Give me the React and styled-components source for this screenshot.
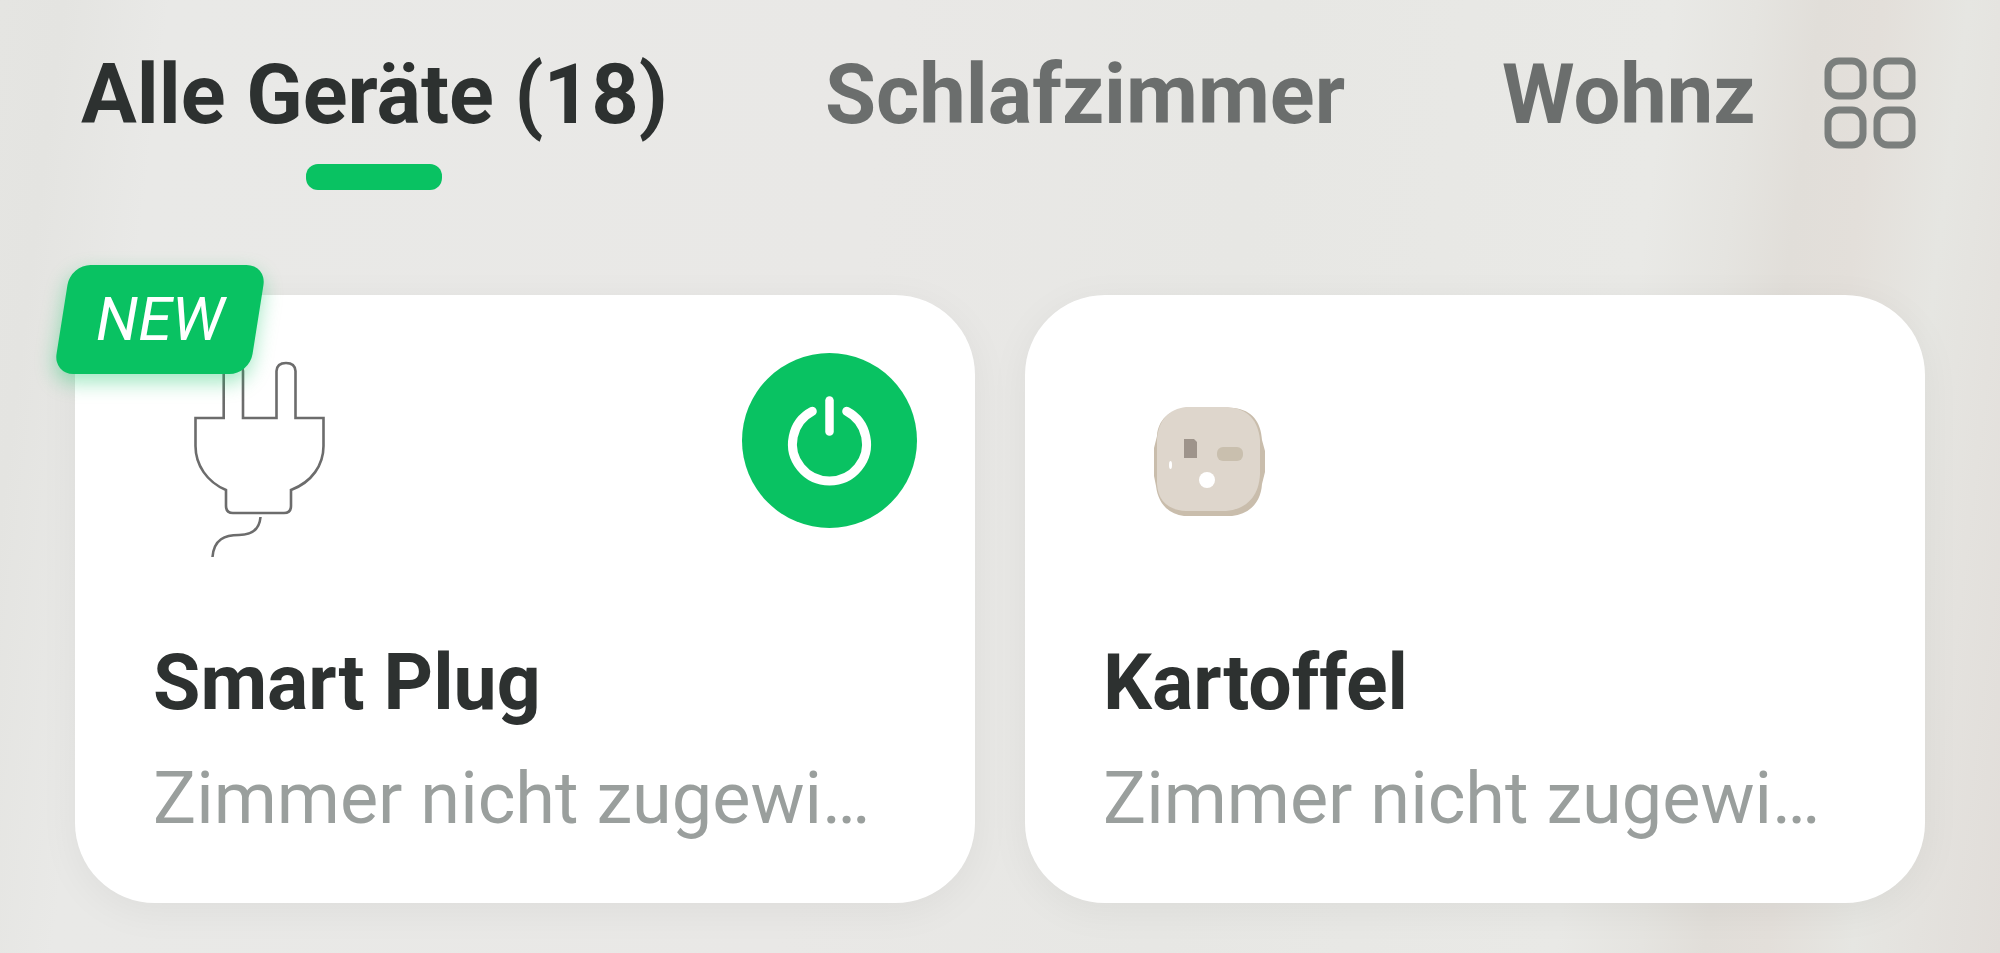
import React, { useState } from 'react';
import styled, { createGlobalStyle, css } from 'styled-components';

const GlobalStyle = createGlobalStyle`
  * {
    box-sizing: border-box;
  }
  body {
    margin: 0;
    background-color: #e8e8e5;
    font-family: Roboto, "Liberation Sans", sans-serif;
  }
  button {
    padding: 0;
    border: 0;
    background: none;
    font-family: inherit;
    cursor: pointer;
  }
`;

const StyledPage = styled.main`
  min-height: 100vh;
  padding: 45px 75px 50px;
  background-image: linear-gradient(
    97deg,
    #e5e5e2 0%,
    #e4e4e1 3%,
    #e9e9e7 8%,
    #e9e8e6 42%,
    #e7e7e4 60%,
    #e9e9e6 79%,
    #e5e4e0 83%,
    #e1ded9 86%,
    #e3dfda 89%,
    #e6e6e2 93%,
    #e4e2de 96%,
    #e1ddd9 100%
  );
`;

const StyledHeader = styled.header`
  display: flex;
  align-items: flex-start;
  justify-content: space-between;
  padding: 0 9px 0 6px;
`;

const StyledTabs = styled.nav`
  display: flex;
  gap: 157px;
  min-width: 0;
  overflow: hidden;
`;

const StyledTab = styled.button`
  display: flex;
  flex-direction: column;
  align-items: center;
  gap: 19px;
  font-size: 83px;
  line-height: 100px;
  font-weight: bold;
  white-space: nowrap;
  color: #6b6e6d;
  ${({ $active }) => $active && css`
    color: #2d3130;
    &::after {
      content: '';
      width: 136px;
      height: 26px;
      border-radius: 12px;
      background-color: #09c262;
    }
  `}
`;

const StyledGridButton = styled.button`
  flex: none;
  margin-top: 12px;
  svg {
    display: block;
  }
`;

const StyledCards = styled.section`
  display: grid;
  grid-template-columns: 1fr 1fr;
  gap: 50px;
  margin-top: 105px;
`;

const StyledCard = styled.article`
  position: relative;
  padding: 58px 58px 56px 78px;
  border-radius: 80px;
  background-color: white;
  box-shadow: 0 8px 40px rgba(0, 0, 0, 0.05);
`;

const StyledCardTop = styled.div`
  display: flex;
  align-items: flex-start;
  justify-content: space-between;
  height: 280px;
  svg {
    display: block;
  }
`;

const StyledPower = styled.button`
  width: 175px;
  height: 175px;
  border-radius: 50%;
  background-color: #09c262;
`;

const StyledName = styled.h2`
  margin: 0;
  font-size: 77px;
  line-height: 100px;
  font-weight: bold;
  color: #2d3130;
`;

const StyledRoom = styled.p`
  margin: 18px 0 0;
  font-size: 72px;
  line-height: 96px;
  white-space: nowrap;
  color: #9a9f9d;
`;

const StyledBadge = styled.span`
  position: absolute;
  top: -30px;
  left: -13px;
  z-index: 1;
  padding: 0 34px;
  font-size: 61px;
  line-height: 109px;
  font-style: italic;
  color: white;
  &::before {
    content: '';
    position: absolute;
    inset: 0;
    z-index: -1;
    border-radius: 20px;
    background-color: #09c262;
    box-shadow: 0 8px 20px rgba(9, 194, 98, 0.4);
    transform: skewX(-9deg);
  }
`;

const GridIcon = () => (
  <svg width="92" height="92" viewBox="0 0 92 92" fill="none" stroke="#7b7f7d" strokeWidth="7">
    <rect x="4" y="4" width="35" height="35" rx="11" />
    <rect x="53" y="4" width="35" height="35" rx="11" />
    <rect x="4" y="53" width="35" height="35" rx="11" />
    <rect x="53" y="53" width="35" height="35" rx="11" />
  </svg>
);

const PlugIcon = () => (
  <svg width="212" height="212" viewBox="153 353 212 212" fill="none" stroke="#6c6c6c" strokeWidth="2.6">
    <path d="M195.5 418H223.7V371Q224 363 233.5 363T243 371V418H276.5V371Q277 363 286 363T295.5 371V418H323.5V446C323.5 465 312 482 291 490V506Q291 513 284 513H233Q226 513 226 506V490C207 482 195.5 465 195.5 446Z" />
    <path d="M260.5 517C259.5 529 252 535 239 535C225 535 214 539 212.5 557" />
  </svg>
);

const PowerIcon = () => (
  <svg width="175" height="175" viewBox="0 0 175 175" fill="none" stroke="white" strokeLinecap="round">
    <path d="M70.3 58.3A37 37 0 1 0 104.7 58.3" strokeWidth="9" />
    <path d="M87.5 47.5V78.5" strokeWidth="8.5" />
  </svg>
);

const SocketIcon = () => (
  <svg width="212" height="212" viewBox="1103 353 212 212">
    <path d="M1186 408H1234C1252 410 1261 422 1262 440L1265 451V472L1262 484C1261 502 1250 514 1232 516H1184C1168 514 1158 503 1156 486L1154 476V448L1157 436C1158 420 1169 410 1186 408Z" fill="#c9bdac" />
    <path d="M1186 407H1228C1248 409 1258 420 1260 440V474C1259 496 1247 509 1226 511H1186C1167 510 1158 500 1157 484V440C1158 420 1169 409 1186 407Z" fill="#ded6cc" />
    <path d="M1184 439H1194L1197 442V458H1184Z" fill="#9e948b" />
    <rect x="1217" y="447" width="26" height="14" rx="6" fill="#c9bfae" />
    <circle cx="1207" cy="480" r="8" fill="white" />
    <ellipse cx="1170.5" cy="465" rx="1.5" ry="4" fill="white" />
  </svg>
);

const tabs = ['Alle Geräte (18)', 'Schlafzimmer', 'Wohnz'];

const devices = [
  { name: 'Smart Plug', room: 'Zimmer nicht zugewi…', icon: <PlugIcon />, isNew: true, power: true },
  { name: 'Kartoffel', room: 'Zimmer nicht zugewi…', icon: <SocketIcon /> },
];

const App = () => {
  const [activeTab, setActiveTab] = useState(0);

  return (
    <>
      <GlobalStyle />
      <StyledPage>
        <StyledHeader>
          <StyledTabs>
            {tabs.map((tab, i) => (
              <StyledTab key={tab} $active={i === activeTab} onClick={() => setActiveTab(i)}>
                {tab}
              </StyledTab>
            ))}
          </StyledTabs>
          <StyledGridButton aria-label="Räume">
            <GridIcon />
          </StyledGridButton>
        </StyledHeader>
        <StyledCards>
          {devices.map((device) => (
            <StyledCard key={device.name}>
              {device.isNew && <StyledBadge>NEW</StyledBadge>}
              <StyledCardTop>
                {device.icon}
                {device.power && (
                  <StyledPower aria-label="Ein/Aus">
                    <PowerIcon />
                  </StyledPower>
                )}
              </StyledCardTop>
              <StyledName>{device.name}</StyledName>
              <StyledRoom>{device.room}</StyledRoom>
            </StyledCard>
          ))}
        </StyledCards>
      </StyledPage>
    </>
  );
};

export default App;
